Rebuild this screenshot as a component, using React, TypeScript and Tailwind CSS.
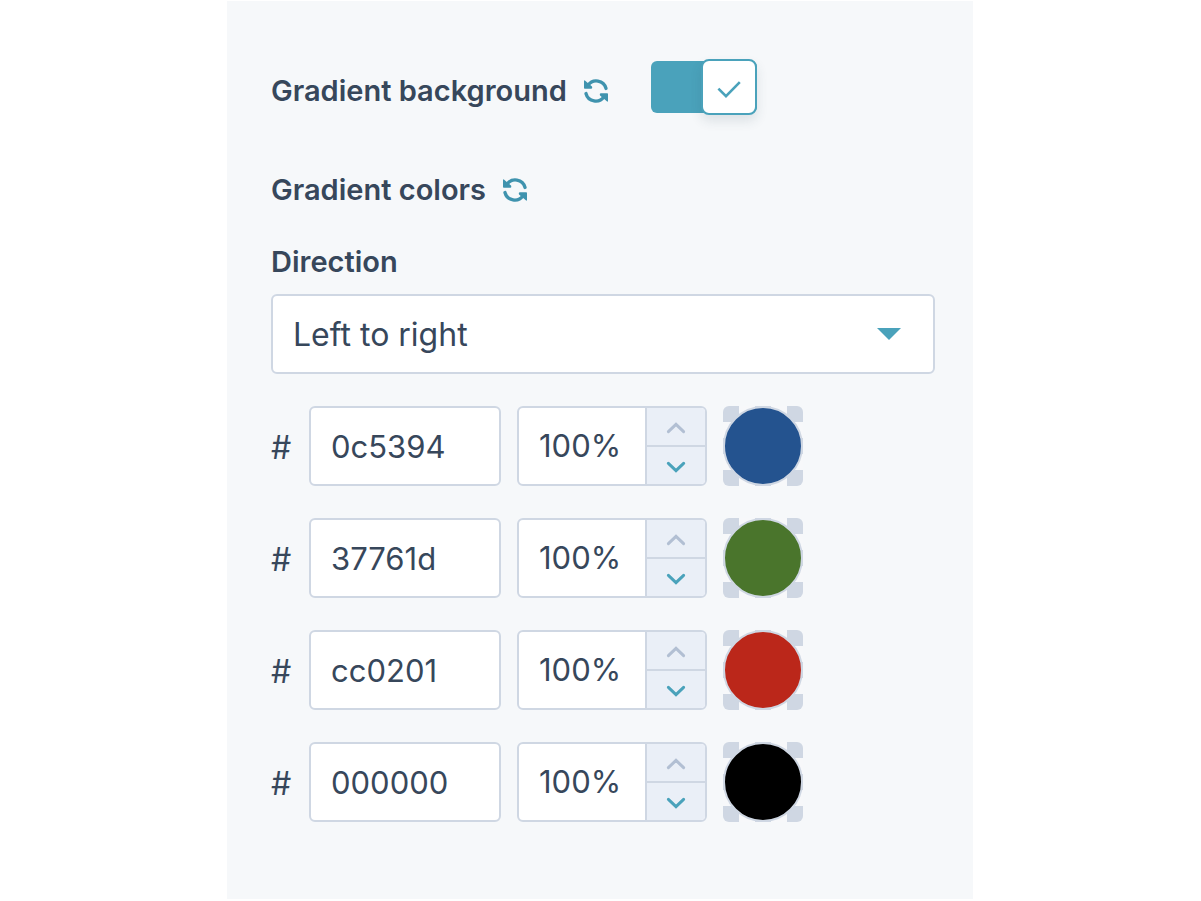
import React, { useState } from 'react';

interface GradientStop {
  hex: string;
  opacity: string;
  swatch: string;
}

const STOPS: GradientStop[] = [
  { hex: '0c5394', opacity: '100%', swatch: 'bg-[#24538f]' },
  { hex: '37761d', opacity: '100%', swatch: 'bg-[#4a752c]' },
  { hex: 'cc0201', opacity: '100%', swatch: 'bg-[#bb271a]' },
  { hex: '000000', opacity: '100%', swatch: 'bg-black' },
];

function SyncIcon() {
  return (
    <svg viewBox="0 0 26 26" className="size-[26px]" fill="none" aria-hidden="true">
      <path d="M5 7.4 A10 10 0 0 1 23 10.4" stroke="currentColor" strokeWidth="3.4" strokeLinecap="round" />
      <path d="M21 18.6 A10 10 0 0 1 3 15.6" stroke="currentColor" strokeWidth="3.4" strokeLinecap="round" />
      <path d="M1 3 Q1.2 1.8 2.2 2.8 L9 8.6 Q9.8 10.4 8.4 10.8 H1.8 Q1 10.8 1 10 Z" fill="currentColor" />
      <path d="M25 23 Q24.8 24.2 23.8 23.2 L17 17.4 Q16.2 15.6 17.6 15.2 H24.2 Q25 15.2 25 16 Z" fill="currentColor" />
    </svg>
  );
}

function ResetButton({ label }: { label: string }) {
  return (
    <button type="button" aria-label={label} className="text-[#3f93ae]">
      <SyncIcon />
    </button>
  );
}

function Toggle() {
  const [on, setOn] = useState(true);

  return (
    <button
      type="button"
      role="switch"
      aria-checked={on}
      aria-labelledby="gradient-background"
      onClick={() => setOn(!on)}
      className={`flex h-[52px] w-[106px] items-center rounded-md ${on ? 'justify-end bg-[#4aa2bb]' : 'justify-start bg-[#cbd6e2]'}`}
    >
      <span className="flex h-14 w-14 shrink-0 items-center justify-center rounded-lg border-2 border-[#4aa2bb] bg-white text-[#4aa2bb] shadow-[0_6px_12px_rgba(45,62,80,0.12)]">
        {on && (
          <svg viewBox="0 0 24 24" className="size-6" fill="none" aria-hidden="true">
            <path d="M1.4 13.6 L9 21.2 L22.8 7.2" stroke="currentColor" strokeWidth="2.6" />
          </svg>
        )}
      </span>
    </button>
  );
}

function Chevron({ up }: { up?: boolean }) {
  return (
    <svg viewBox="0 0 20 12" className="h-3 w-5" fill="none" aria-hidden="true">
      <path
        d={up ? 'M2.4 9.6 L10 2.4 L17.6 9.6' : 'M2.4 2.4 L10 9.6 L17.6 2.4'}
        stroke="currentColor"
        strokeWidth="3"
        strokeLinecap="round"
      />
    </svg>
  );
}

function StopRow({ stop, index }: { stop: GradientStop; index: number }) {
  const id = `color-${index}`;

  return (
    <div className="flex h-20 items-center">
      <label htmlFor={id} className="w-[38px] pt-1 text-[32px] leading-10">#</label>
      <input
        id={id}
        defaultValue={stop.hex}
        className="h-20 w-48 rounded-md border-2 border-[#cfd7e3] bg-white px-5 text-[31px] leading-10"
      />
      <div className="ml-4 flex h-20 w-[190px] overflow-hidden rounded-md border-2 border-[#cfd7e3] bg-white">
        <input
          aria-label={`Opacity ${index + 1}`}
          defaultValue={stop.opacity}
          className="min-w-0 flex-1 pl-5 text-[31px] leading-10"
        />
        <div className="flex w-[60px] flex-col border-l-2 border-[#cfd7e3] bg-[#eaeff7]">
          <button type="button" disabled aria-label="Increase" className="flex flex-1 items-center justify-center border-b-2 border-[#cfd7e3] pt-0.5 text-[#b2bfd3]">
            <Chevron up />
          </button>
          <button type="button" aria-label="Decrease" className="flex flex-1 items-center justify-center pt-0.5 text-[#4aa2bb]">
            <Chevron />
          </button>
        </div>
      </div>
      <button
        type="button"
        aria-label={`Pick color ${index + 1}`}
        className="ml-4 size-20 overflow-hidden rounded-md bg-[repeating-conic-gradient(#cfd7e3_0_25%,#f7f8fa_0_50%)] bg-[length:32px_32px] bg-[position:16px_0px]"
      >
        <span className={`block size-20 rounded-full border-2 border-[#cfd7e3] ${stop.swatch}`} />
      </button>
    </div>
  );
}

export default function App() {
  return (
    <div className="min-h-screen bg-white py-px pr-px font-['Inter',sans-serif] text-[#37475b]">
      <main className="mx-auto max-w-[746px] bg-[#f6f8fa] pt-15 pr-[38px] pb-[77px] pl-11">
        <div className="flex h-[52px] items-center">
          <h2 id="gradient-background" className="pt-2 text-[29px] leading-10 font-semibold">Gradient background</h2>
          <div className="flex pt-2 pr-[42px] pl-4">
            <ResetButton label="Reset gradient background" />
          </div>
          <Toggle />
        </div>

        <div className="mt-[57px] flex h-10 items-center gap-4">
          <h2 className="text-[29px] leading-10 font-semibold">Gradient colors</h2>
          <ResetButton label="Reset gradient colors" />
        </div>

        <label htmlFor="direction" className="mt-8 block text-[29px] leading-10 font-semibold">Direction</label>
        <div className="mt-3 grid items-center">
          <select
            id="direction"
            className="col-start-1 row-start-1 h-20 w-full appearance-none rounded-md border-2 border-[#cfd7e3] bg-white px-5 pt-0.5 text-[32px] leading-10"
          >
            <option>Left to right</option>
            <option>Top to bottom</option>
          </select>
          <svg viewBox="0 0 24 12" className="pointer-events-none col-start-1 row-start-1 mr-[34px] h-3 w-6 justify-self-end text-[#4aa2bb]" aria-hidden="true">
            <path d="M0 0 H24 L12 12 Z" fill="currentColor" />
          </svg>
        </div>

        <div className="mt-8 flex flex-col gap-8">
          {STOPS.map((stop, i) => (
            <StopRow key={stop.hex} stop={stop} index={i} />
          ))}
        </div>
      </main>
    </div>
  );
}
